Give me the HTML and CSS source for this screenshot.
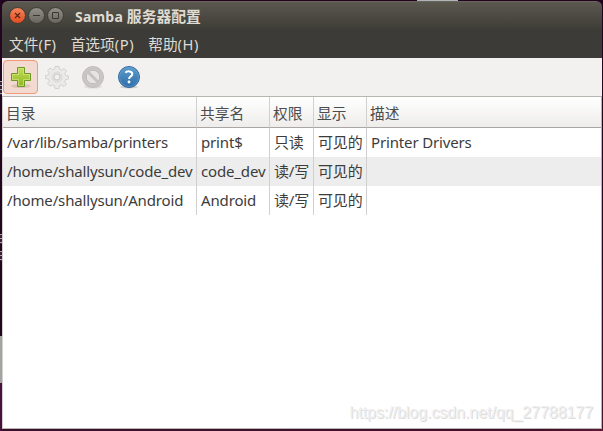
FILE: index.html
```
<!DOCTYPE html>
<html lang="zh-CN">
<head>
<meta charset="utf-8">
<title>Samba 服务器配置</title>
<link rel="stylesheet" href="styles.css">
</head>
<body>
<div class="window">
  <header class="titlebar">
    <svg class="controls" width="60" height="18" viewBox="0 0 60 18">
      <defs>
        <linearGradient id="red" x1="0" y1="0" x2="0" y2="1"><stop offset="0" stop-color="#f7865f"/><stop offset="1" stop-color="#df4b1d"/></linearGradient>
        <linearGradient id="gray" x1="0" y1="0" x2="0" y2="1"><stop offset="0" stop-color="#93918a"/><stop offset="1" stop-color="#66645d"/></linearGradient>
      </defs>
      <circle cx="10.500" cy="8.500" r="8" fill="url(#red)" stroke="#3c3a34"/>
      <circle cx="29.500" cy="8.500" r="8" fill="url(#gray)" stroke="#3c3a34"/>
      <circle cx="48.500" cy="8.500" r="8" fill="url(#gray)" stroke="#3c3a34"/>
      <path d="M8 6l5 5m0-5l-5 5" stroke="#5c2410" stroke-width="1.200" fill="none"/>
      <path d="M26 8.500h7M45.500 5.500h6v6h-6z" stroke="#393832" fill="none"/>
    </svg>
    <h1 class="title"><span class="title-app">Samba</span> 服务器配置</h1>
  </header>
  <nav class="menubar"><span>文件<i>(F)</i></span><span>首选项<i>(P)</i></span><span>帮助<i>(H)</i></span></nav>
  <div class="toolbar">
    <button class="tool active" aria-label="添加">
      <svg width="24" height="24" viewBox="0 0 24 24">
        <defs><linearGradient id="green" x1="0" y1="0" x2="0" y2="1"><stop offset="0" stop-color="#c5dc5c"/><stop offset="1" stop-color="#8fb71e"/></linearGradient></defs>
        <ellipse cx="12" cy="21" rx="10" ry="2" fill="#8c6b5a" opacity=".2"/>
        <path d="M8.500 2.500h7v6h6v7h-6v6h-7v-6h-6v-7h6z" fill="url(#green)" stroke="#6a9a25" stroke-linejoin="round"/>
        <path d="M9.500 3.500h5v6h6v5h-6v6h-5v-6h-6v-5h6z" fill="none" stroke="#d8e98c" opacity=".6"/>
      </svg>
    </button>
    <button class="tool" aria-label="属性">
      <svg width="24" height="24" viewBox="0 0 24 24" fill="none" stroke="#d3d1cf">
        <path fill="#ebeae9" stroke-linejoin="round" d="M10 1.500h4l.5 3 2 .8 2.500-1.800 2.500 2.500-1.800 2.500.8 2 3 .5v3l-3 .6-.8 2 1.800 2.500-2.500 2.500-2.500-1.800-2 .8-.5 2.900h-4l-.5-2.900-2-.8L5 21.100l-2.500-2.500 1.800-2.500-.8-2-3-.6v-3l3-.5.8-2L2.500 5.500 5 3l2.500 1.800 2-.8z"/>
        <circle cx="12" cy="12" r="5" stroke="#dad8d6"/>
        <circle cx="12" cy="12" r="3" fill="#f2f1f0" stroke-width="1.500"/>
      </svg>
    </button>
    <button class="tool" aria-label="删除">
      <svg width="24" height="24" viewBox="0 0 24 24">
        <ellipse cx="12" cy="21.500" rx="9" ry="2" fill="#dedcda"/>
        <circle cx="12" cy="12" r="10.500" fill="#c9c6c4" stroke="#bfbcba"/>
        <circle cx="12" cy="12" r="6.800" fill="#e6e4e2" stroke="#bfbcba"/>
        <path d="M7.300 7.300l9.400 9.400" stroke="#c5c2c0" stroke-width="3"/>
      </svg>
    </button>
    <button class="tool" aria-label="帮助">
      <svg width="24" height="24" viewBox="0 0 24 24">
        <defs><linearGradient id="blue" x1="0" y1="0" x2="0" y2="1"><stop offset="0" stop-color="#5c9dcc"/><stop offset="1" stop-color="#2d6ca9"/></linearGradient></defs>
        <ellipse cx="12" cy="22" rx="9" ry="1.500" fill="#cfcdcb"/>
        <circle cx="12" cy="12" r="10.500" fill="url(#blue)" stroke="#2f689f"/>
        <circle cx="12" cy="12" r="9.500" fill="none" stroke="#79aed6" opacity=".45"/>
        <path d="M8.500 7.700C9.500 6 15.300 5.500 15.300 8.900c0 2.500-3.300 2.400-3.300 5.100" fill="none" stroke="#fff" stroke-width="2"/>
        <circle cx="12" cy="17" r="1.400" fill="#fff"/>
      </svg>
    </button>
  </div>
  <main class="content">
    <table class="shares">
      <colgroup><col class="c-dir"><col class="c-name"><col class="c-perm"><col class="c-show"><col></colgroup>
      <thead><tr><th>目录</th><th>共享名</th><th>权限</th><th>显示</th><th>描述</th></tr></thead>
      <tbody>
        <tr><td>/var/lib/samba/printers</td><td>print$</td><td>只读</td><td>可见的</td><td>Printer Drivers</td></tr>
        <tr><td>/home/shallysun/code_dev</td><td>code_dev</td><td>读/写</td><td>可见的</td><td></td></tr>
        <tr><td>/home/shallysun/Android</td><td>Android</td><td>读/写</td><td>可见的</td><td></td></tr>
      </tbody>
    </table>
    <div class="watermark">https://blog.csdn.net/qq_27788177</div>
  </main>
</div>
</body>
</html>
```
FILE: styles.css
```
* { box-sizing: border-box; }
body {
  margin: 0;
  width: 603px;
  height: 431px;
  padding: 1px 1px 1px 2px;
  overflow: hidden;
  font-family: "Noto Sans", "Noto Sans CJK SC", sans-serif;
  font-size: 15px;
  color: #3c3c3c;
  background:
    linear-gradient(#b0b4b4, #b0b4b4) 417px 0 / 41px 1px no-repeat,
    repeating-linear-gradient(#a9a0a6 0 1px, #3a2035 1px 4px) 0 81px / 2px 14px no-repeat,
    repeating-linear-gradient(#a9a0a6 0 1px, #3a2035 1px 4px) 0 234px / 2px 10px no-repeat,
    repeating-linear-gradient(#a9a0a6 0 1px, #3a2035 1px 4px) 0 251px / 2px 10px no-repeat,
    linear-gradient(#24051f 0 336px, #a3a3a3 336px 383px, #46103f 383px) 0 0 / 2px 431px no-repeat,
    linear-gradient(90deg, #38102f, #401128 90%, #5a1a38) 0 429px / 603px 2px no-repeat,
    linear-gradient(#21031f, #2a0522 60%, #4a1631);
}
.window { height: 428px; display: flex; flex-direction: column; }
.titlebar {
  height: 28px;
  display: flex;
  align-items: center;
  padding: 1px 0 0 5px;
  border-top: 1px solid #67655d;
  border-radius: 6px 6px 0 0;
  background: linear-gradient(#5b584f, #3e3d37);
}
.controls { display: block; }
.title { margin: 0 0 0 8px; font-size: 14.800px; line-height: 20px; color: #dfdbd2; white-space: nowrap; }
.title-app { font-size: 14px; letter-spacing: .2px; }
.menubar {
  height: 29px;
  display: flex;
  gap: 14px;
  align-items: center;
  padding-left: 7px;
  background: #3c3b37;
  color: #dfdbd2;
  white-space: nowrap;
}
.menubar span { font-size: 14.700px; line-height: 22px; }
.menubar i { font-style: normal; letter-spacing: .6px; }
.toolbar { height: 38px; display: flex; padding: 2px 0 0 1px; gap: 1px; background: #f2f1f0; }
.tool {
  width: 35px;
  height: 34px;
  padding: 0;
  display: grid;
  place-items: center;
  border: 1px solid transparent;
  border-radius: 4px;
  background: none;
}
.tool.active { border-color: #f09a77; background: #f3dad0; }
.content {
  flex: 1;
  display: flex;
  flex-direction: column;
  justify-content: space-between;
  border: 1px solid #b8b4b0;
  border-left-color: #d3cfcb;
  background: #fff;
}
.shares { width: 100%; border-collapse: separate; border-spacing: 0; table-layout: fixed; }
.c-dir { width: 194px; }
.c-name { width: 73px; }
.c-perm { width: 44px; }
.c-show { width: 53px; }
.shares th, .shares td { padding: 0 0 0 4px; text-align: left; white-space: nowrap; border-right: 1px solid #d0d0d0; line-height: 22px; }
.shares th { height: 31px; padding: 1px 0 0 3px; font-weight: 400; font-size: 14.700px; color: #4c4c4c; border-bottom: 1px solid #a9a6a3; background: linear-gradient(#fff, #eeedeb); }
.shares td { height: 29px; padding-bottom: 2px; letter-spacing: -.15px; }
.shares th:last-child, .shares td:last-child { border-right: 0; }
.shares tbody tr:nth-child(2) { background: #ededed; }
.watermark {
  align-self: flex-end;
  margin: 0 8px 5px 0;
  font: 16px/20px "Liberation Sans", sans-serif;
  letter-spacing: -.06px;
  color: #efefef;
  text-shadow: 1px 1px #dcdcdc;
}
```
